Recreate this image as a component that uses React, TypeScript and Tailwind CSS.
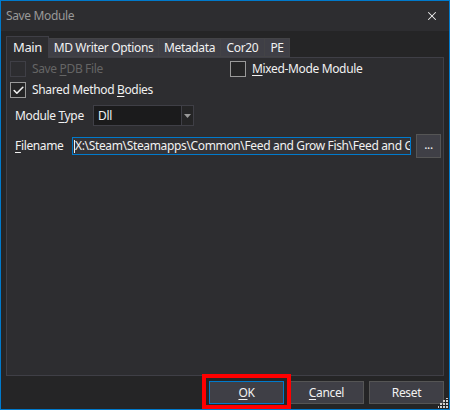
import { Check, X } from "lucide-react";

const font = { fontFamily: '"Noto Sans", "Open Sans", sans-serif' };

function AccessKey({ text, index }: { text: string; index: number }) {
  return (
    <>
      {text.slice(0, index)}
      <u className="underline-offset-2">{text[index]}</u>
      {text.slice(index + 1)}
    </>
  );
}

function CheckBox({
  label,
  keyIndex,
  checked,
  disabled,
}: {
  label: string;
  keyIndex: number;
  checked?: boolean;
  disabled?: boolean;
}) {
  return (
    <div className="flex items-center gap-[6px]">
      <div
        className={`flex h-[16px] w-[16px] items-center justify-center border ${
          disabled ? "border-[#3f3f46] bg-[#2d2d30]" : "border-[#999999] bg-[#252526]"
        }`}
      >
        {checked ? <Check className="h-[13px] w-[13px] text-[#f1f1f1]" strokeWidth={3} /> : null}
      </div>
      <span className={disabled ? "text-[#656565]" : "text-[#f1f1f1]"}>
        <AccessKey text={label} index={keyIndex} />
      </span>
    </div>
  );
}

const tabs = [
  { label: "MD Writer Options", width: "w-[110px]" },
  { label: "Metadata", width: "w-[62px]" },
  { label: "Cor20", width: "w-[44px]" },
  { label: "PE", width: "w-[25px]" },
];

export default function App() {
  return (
    <div
      className="flex h-[410px] w-[450px] flex-col border border-[#007acc] bg-[#252526] text-[12px] tracking-[-0.35px] text-[#f1f1f1]"
      style={font}
    >
      <div className="flex h-[30px] shrink-0 items-center justify-between bg-[#2d2d30] pl-[5px] pr-[10px]">
        <span className="text-[#999999]">Save Module</span>
        <X className="h-[14px] w-[14px] text-[#f1f1f1]" strokeWidth={1.8} />
      </div>

      <div className="flex flex-1 flex-col px-[5px] pt-[5px]">
        <div className="flex h-[21px] items-end">
          <div className="relative z-10 -mb-px flex h-[22px] w-[43px] shrink-0 items-center justify-center border border-b-0 border-[#3f3f46] bg-[#2d2d30] text-[13px]">
            Main
          </div>
          {tabs.map((tab) => (
            <div
              key={tab.label}
              className={`flex h-[19px] shrink-0 items-center justify-center border-y border-r border-[#434346] bg-[#3f3f46] text-[12px] ${tab.width}`}
            >
              {tab.label}
            </div>
          ))}
        </div>

        <div className="flex h-[319px] flex-col border border-[#3f3f46] bg-[#2d2d30] pl-[3px] pr-[2px] pt-[3px]">
          <div className="flex h-[16px] items-center">
            <div className="w-[220px]">
              <CheckBox label="Save PDB File" keyIndex={5} disabled />
            </div>
            <CheckBox label="Mixed-Mode Module" keyIndex={0} />
          </div>
          <div className="mt-[5px] flex h-[16px] items-center">
            <CheckBox label="Shared Method Bodies" keyIndex={14} checked />
          </div>

          <div className="mt-[7px] flex items-center pl-[5px]">
            <span className="w-[78px]">
              <AccessKey text="Module Type" index={7} />
            </span>
            <div className="flex h-[21px] w-[101px] border border-[#3f3f46] bg-[#1b1b1c]">
              <span className="flex flex-1 items-center pl-[4px]">Dll</span>
              <div className="flex w-[12px] items-center justify-center border-l border-[#3f3f46] bg-[#252526]">
                <svg width="7" height="4" viewBox="0 0 7 4">
                  <path d="M0 0h7L3.5 4z" fill="#999999" />
                </svg>
              </div>
            </div>
          </div>

          <div className="mt-[8px] flex items-center pl-[5px]">
            <span className="w-[57px]">
              <AccessKey text="Filename" index={0} />
            </span>
            <div className="flex h-[18px] w-[339px] items-center overflow-hidden whitespace-nowrap border border-[#007acc] bg-[#333337] pl-[1px]">
              <span className="h-[13px] w-px shrink-0 bg-[#f1f1f1]" />
              <span>X:\Steam\Steamapps\Common\Feed and Grow Fish\Feed and Grow Fish.exe</span>
            </div>
            <div className="ml-[5px] flex h-[24px] w-[25px] items-center justify-center border border-[#555555] bg-[#3f3f46] pb-[3px]">
              ...
            </div>
          </div>
        </div>

        <div className="mt-[5px] flex justify-end gap-[5px]">
          <div className="relative">
            <div className="flex h-[23px] w-[75px] items-center justify-center border border-[#007acc] bg-[#3f3f46]">
              <AccessKey text="OK" index={0} />
            </div>
            <div className="absolute -inset-x-[7px] -bottom-[5px] -top-[7px] border-4 border-[#ff0000]" />
          </div>
          <div className="flex h-[23px] w-[75px] items-center justify-center border border-[#555555] bg-[#3f3f46]">
            <AccessKey text="Cancel" index={0} />
          </div>
          <div className="flex h-[23px] w-[75px] items-center justify-center border border-[#555555] bg-[#3f3f46]">
            Reset
          </div>
        </div>
        <div className="relative flex-1">
          <svg className="absolute bottom-[1px] right-[-4px]" width="10" height="10" viewBox="0 0 10 10">
            {[
              [8, 0],
              [8, 3],
              [5, 3],
              [8, 6],
              [5, 6],
              [2, 6],
              [8, 9],
              [5, 9],
              [2, 9],
              [-1, 9],
            ].map(([x, y]) => (
              <rect key={`${x}-${y}`} x={x} y={y - 1} width="2" height="2" fill="#d0d0d0" />
            ))}
          </svg>
        </div>
      </div>
    </div>
  );
}
